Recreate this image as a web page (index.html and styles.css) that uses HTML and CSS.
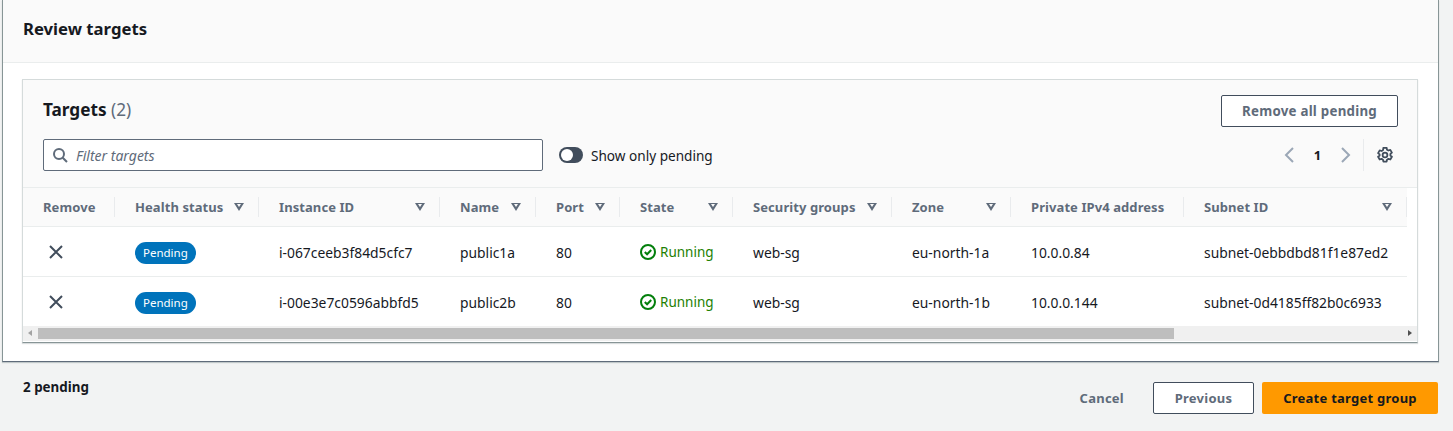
FILE: index.html
```html
<!DOCTYPE html>
<html>
<head>
    <title>Review targets</title>
    <link rel="stylesheet" href="styles.css">
</head>
<body>
    <div class="card">
        <div class="card-header">
            <h2>Review targets</h2>
        </div>
        <div class="card-body">
            <div class="panel">
                <div class="panel-head">
                    <div class="title-row">
                        <h3>Targets <span class="count">(2)</span></h3>
                        <button class="btn remove-all">Remove all pending</button>
                    </div>
                    <div class="tools-row">
                        <div class="filter">
                            <svg class="search-icon" width="16" height="16" viewBox="0 0 16 16"><circle cx="7" cy="7" r="5" fill="none" stroke="#5f6b7a" stroke-width="2"/><path d="M10.7 10.7L15 15" stroke="#5f6b7a" stroke-width="2" fill="none"/></svg>
                            <span class="placeholder">Filter targets</span>
                        </div>
                        <div class="toggle"><span class="knob"></span></div>
                        <span class="toggle-label">Show only pending</span>
                        <div class="pager">
                            <svg width="16" height="16" viewBox="0 0 16 16"><path d="M11 1L4 8l7 7" fill="none" stroke="#9ba7b6" stroke-width="2"/></svg>
                            <span class="page-no">1</span>
                            <svg width="16" height="16" viewBox="0 0 16 16"><path d="M5 1l7 7-7 7" fill="none" stroke="#9ba7b6" stroke-width="2"/></svg>
                            <span class="pager-line"></span>
                            <svg width="16" height="16" viewBox="0 0 16 16"><path d="M6.400.8h3.200l.4 1.900 1.400.8 1.900-.6 1.600 2.700-1.500 1.300v1.600l1.500 1.300-1.600 2.700-1.900-.6-1.400.8-.4 1.900H6.400l-.4-1.900-1.400-.8-1.900.6-1.600-2.700 1.500-1.300V7.400L1.100 6.100l1.600-2.700 1.900.6 1.400-.8z" fill="none" stroke="#414d5c" stroke-width="1.800" stroke-linejoin="round"/><circle cx="8" cy="8" r="2.400" fill="none" stroke="#414d5c" stroke-width="1.800"/></svg>
                        </div>
                    </div>
                </div>
                <div class="table-wrap">
                    <table>
                        <thead>
                            <tr>
                                <th class="c-remove"><div class="th-in">Remove</div></th>
                                <th class="c-health"><div class="th-in">Health status <i class="caret"></i></div></th>
                                <th class="c-instance"><div class="th-in">Instance ID <i class="caret"></i></div></th>
                                <th class="c-name"><div class="th-in">Name <i class="caret"></i></div></th>
                                <th class="c-port"><div class="th-in">Port <i class="caret"></i></div></th>
                                <th class="c-state"><div class="th-in">State <i class="caret"></i></div></th>
                                <th class="c-sg"><div class="th-in">Security groups <i class="caret"></i></div></th>
                                <th class="c-zone"><div class="th-in">Zone <i class="caret"></i></div></th>
                                <th class="c-ip"><div class="th-in">Private IPv4 address</div></th>
                                <th class="c-subnet"><div class="th-in">Subnet ID <i class="caret"></i></div></th>
                            </tr>
                        </thead>
                        <tbody>
                            <tr>
                                <td class="x-cell"><svg width="16" height="16" viewBox="0 0 16 16"><path d="M2 2l12 12M14 2L2 14" stroke="#414d5c" stroke-width="2" fill="none"/></svg></td>
                                <td><span class="badge">Pending</span></td>
                                <td>i-067ceeb3f84d5cfc7</td>
                                <td>public1a</td>
                                <td>80</td>
                                <td><span class="running"><svg width="16" height="16" viewBox="0 0 16 16"><circle cx="8" cy="8" r="7" fill="none" stroke="#037f0c" stroke-width="2"/><path d="M4.800 8l2.300 2.300 4.100-4.300" fill="none" stroke="#037f0c" stroke-width="2"/></svg>Running</span></td>
                                <td>web-sg</td>
                                <td>eu-north-1a</td>
                                <td>10.0.0.84</td>
                                <td>subnet-0ebbdbd81f1e87ed2</td>
                            </tr>
                            <tr>
                                <td class="x-cell"><svg width="16" height="16" viewBox="0 0 16 16"><path d="M2 2l12 12M14 2L2 14" stroke="#414d5c" stroke-width="2" fill="none"/></svg></td>
                                <td><span class="badge">Pending</span></td>
                                <td>i-00e3e7c0596abbfd5</td>
                                <td>public2b</td>
                                <td>80</td>
                                <td><span class="running"><svg width="16" height="16" viewBox="0 0 16 16"><circle cx="8" cy="8" r="7" fill="none" stroke="#037f0c" stroke-width="2"/><path d="M4.800 8l2.300 2.300 4.100-4.300" fill="none" stroke="#037f0c" stroke-width="2"/></svg>Running</span></td>
                                <td>web-sg</td>
                                <td>eu-north-1b</td>
                                <td>10.0.0.144</td>
                                <td>subnet-0d4185ff82b0c6933</td>
                            </tr>
                        </tbody>
                    </table>
                </div>
                <div class="scrollbar">
                    <i class="arrow-left"></i>
                    <div class="thumb"></div>
                    <i class="arrow-right"></i>
                </div>
            </div>
        </div>
    </div>
    <div class="footer">
        <span class="pending-count">2 pending</span>
        <div class="actions">
            <span class="cancel">Cancel</span>
            <button class="btn previous">Previous</button>
            <button class="btn primary">Create target group</button>
        </div>
    </div>
</body>
</html>
```

FILE: styles.css
```css
body {
    margin: 0;
    height: 431px;
    overflow: hidden;
    font-family: "Noto Sans", sans-serif;
    font-size: 14px;
    color: #16191f;
    background-color: #f2f3f3;
}

.card {
    margin: 0 14px 0 2px;
    height: 362px;
    box-sizing: border-box;
    border: 1px solid #879596;
    border-top: none;
    border-bottom-color: #5f6b7a;
    background-color: #fff;
    box-shadow: 0 1px 1px rgba(0, 28, 36, 0.2);
}

.card-header {
    box-sizing: border-box;
    padding: 17px 20px 0;
    background-color: #fafafa;
    border-bottom: 1px solid #eaeded;
    height: 63px;
}

h2 {
    margin: 0;
    font-size: 16.700px;
    line-height: 24px;
    font-weight: 700;
}

.card-body {
    padding: 16px 20px 0 19px;
}

.panel {
    height: 264px;
    box-sizing: border-box;
    border: 1px solid #d5dbdb;
    border-bottom-color: #879596;
    box-shadow: 0 1px 1px rgba(0, 28, 36, 0.15);
    overflow: hidden;
    background-color: #fff;
}

.panel-head {
    height: 108px;
    box-sizing: border-box;
    padding: 15px 19px 0 20px;
    background-color: #fafafa;
    border-bottom: 1px solid #eaeded;
}

.title-row {
    display: flex;
    justify-content: space-between;
    align-items: center;
    height: 32px;
}

h3 {
    margin: 0 0 3px;
    font-size: 17.200px;
    line-height: 30px;
    font-weight: 700;
}

.count {
    font-weight: 400;
    color: #5f6b7a;
}

.btn {
    font-family: "Noto Sans", sans-serif;
    font-size: 13px;
    font-weight: 700;
    letter-spacing: 0.25px;
    height: 32px;
    box-sizing: border-box;
    border: 1px solid #414d5c;
    border-radius: 2px;
    background-color: #fff;
    color: #5f6b7a;
    padding: 0;
}

.remove-all {
    width: 177px;
    font-size: 13.300px;
}

.tools-row {
    display: flex;
    align-items: center;
    margin-top: 12px;
    height: 32px;
}

.filter {
    display: flex;
    align-items: center;
    width: 500px;
    height: 32px;
    box-sizing: border-box;
    border: 1px solid #5f6b7a;
    border-radius: 2px;
    background-color: #fff;
    padding-left: 8px;
}

.search-icon {
    margin-right: 8px;
}

.placeholder {
    font-size: 14px;
    font-style: italic;
    color: #5f6b7a;
}

.toggle {
    width: 24px;
    height: 16px;
    margin-left: 16px;
    border-radius: 8px;
    background-color: #414d5c;
    position: relative;
}

.knob {
    position: absolute;
    left: 2px;
    top: 2px;
    width: 12px;
    height: 12px;
    border-radius: 50%;
    background-color: #fff;
}

.toggle-label {
    margin-left: 8px;
    font-size: 13.600px;
    color: #16191f;
}

.pager {
    margin-left: auto;
    margin-right: 5px;
    display: flex;
    align-items: center;
    height: 32px;
}

.page-no {
    font-size: 13px;
    font-weight: 700;
    width: 39px;
    text-align: center;
}

.pager-line {
    width: 1px;
    height: 32px;
    background-color: #e9ebed;
    margin: 0 13px 0 10px;
}

.table-wrap {
    overflow: hidden;
}

table {
    width: 1384px;
    table-layout: fixed;
    border-collapse: collapse;
}

th {
    height: 38px;
    box-sizing: border-box;
    padding: 0;
    background-color: #fafafa;
    border-bottom: 1px solid #eaeded;
    text-align: left;
    font-size: 13px;
    font-weight: 700;
    letter-spacing: 0.08px;
    color: #5f6b7a;
}

.th-in {
    display: flex;
    align-items: center;
    justify-content: space-between;
    height: 20px;
    padding: 0 14px 0 20px;
    border-right: 1px solid #e9ebed;
}

.caret {
    width: 0;
    height: 0;
    border-left: 5px solid transparent;
    border-right: 5px solid transparent;
    border-top: 8px solid #5f6b7a;
    position: relative;
}

.caret::after {
    content: "";
    position: absolute;
    left: -2px;
    top: -6.500px;
    width: 0;
    height: 0;
    border-left: 2px solid transparent;
    border-right: 2px solid transparent;
    border-top: 3px solid #fafafa;
}

.c-remove { width: 92px; }
.c-health { width: 144px; }
.c-instance { width: 181px; }
.c-name { width: 96px; }
.c-port { width: 84px; }
.c-state { width: 113px; }
.c-sg { width: 159px; }
.c-zone { width: 119px; }
.c-ip { width: 173px; }
.c-subnet { width: 223px; }

td {
    height: 50px;
    box-sizing: border-box;
    padding: 2px 0 0 20px;
    border-bottom: 1px solid #eaeded;
    font-size: 13.850px;
    white-space: nowrap;
}

tbody tr:last-child td {
    border-bottom: none;
}

td.x-cell {
    padding-left: 25px;
    line-height: 0;
}

.badge {
    display: inline-block;
    height: 22px;
    line-height: 22px;
    margin-top: 2px;
    padding: 0 8px;
    border-radius: 11px;
    background-color: #0073bb;
    color: #fff;
    font-size: 11.500px;
}

.running {
    display: inline-flex;
    align-items: center;
    gap: 4px;
    margin-top: 2px;
    font-size: 13.500px;
    color: #1d8102;
}

.scrollbar {
    display: flex;
    align-items: center;
    height: 15px;
    background-color: #f0f0f0;
    position: relative;
}

.thumb {
    position: absolute;
    left: 15px;
    top: 2px;
    width: 1136px;
    height: 11px;
    background-color: #bebebe;
}

.arrow-left {
    position: absolute;
    left: 5px;
    top: 4px;
    border-top: 3.500px solid transparent;
    border-bottom: 3.500px solid transparent;
    border-right: 4px solid #a3a3a3;
}

.arrow-right {
    position: absolute;
    right: 5px;
    top: 4px;
    border-top: 3.500px solid transparent;
    border-bottom: 3.500px solid transparent;
    border-left: 4px solid #505050;
}

.footer {
    display: flex;
    justify-content: space-between;
    padding: 15px 15px 0 23px;
}

.pending-count {
    font-size: 13.400px;
    font-weight: 700;
    line-height: 20px;
}

.actions {
    display: flex;
    align-items: center;
    margin-top: 5px;
}

.cancel {
    font-size: 13px;
    font-weight: 700;
    letter-spacing: 0.25px;
    color: #5f6b7a;
    margin-right: 29px;
}

.btn.previous {
    width: 101px;
    margin-right: 8px;
}

.btn.primary {
    width: 176px;
    border: none;
    background-color: #ff9900;
    color: #16191f;
}
```
